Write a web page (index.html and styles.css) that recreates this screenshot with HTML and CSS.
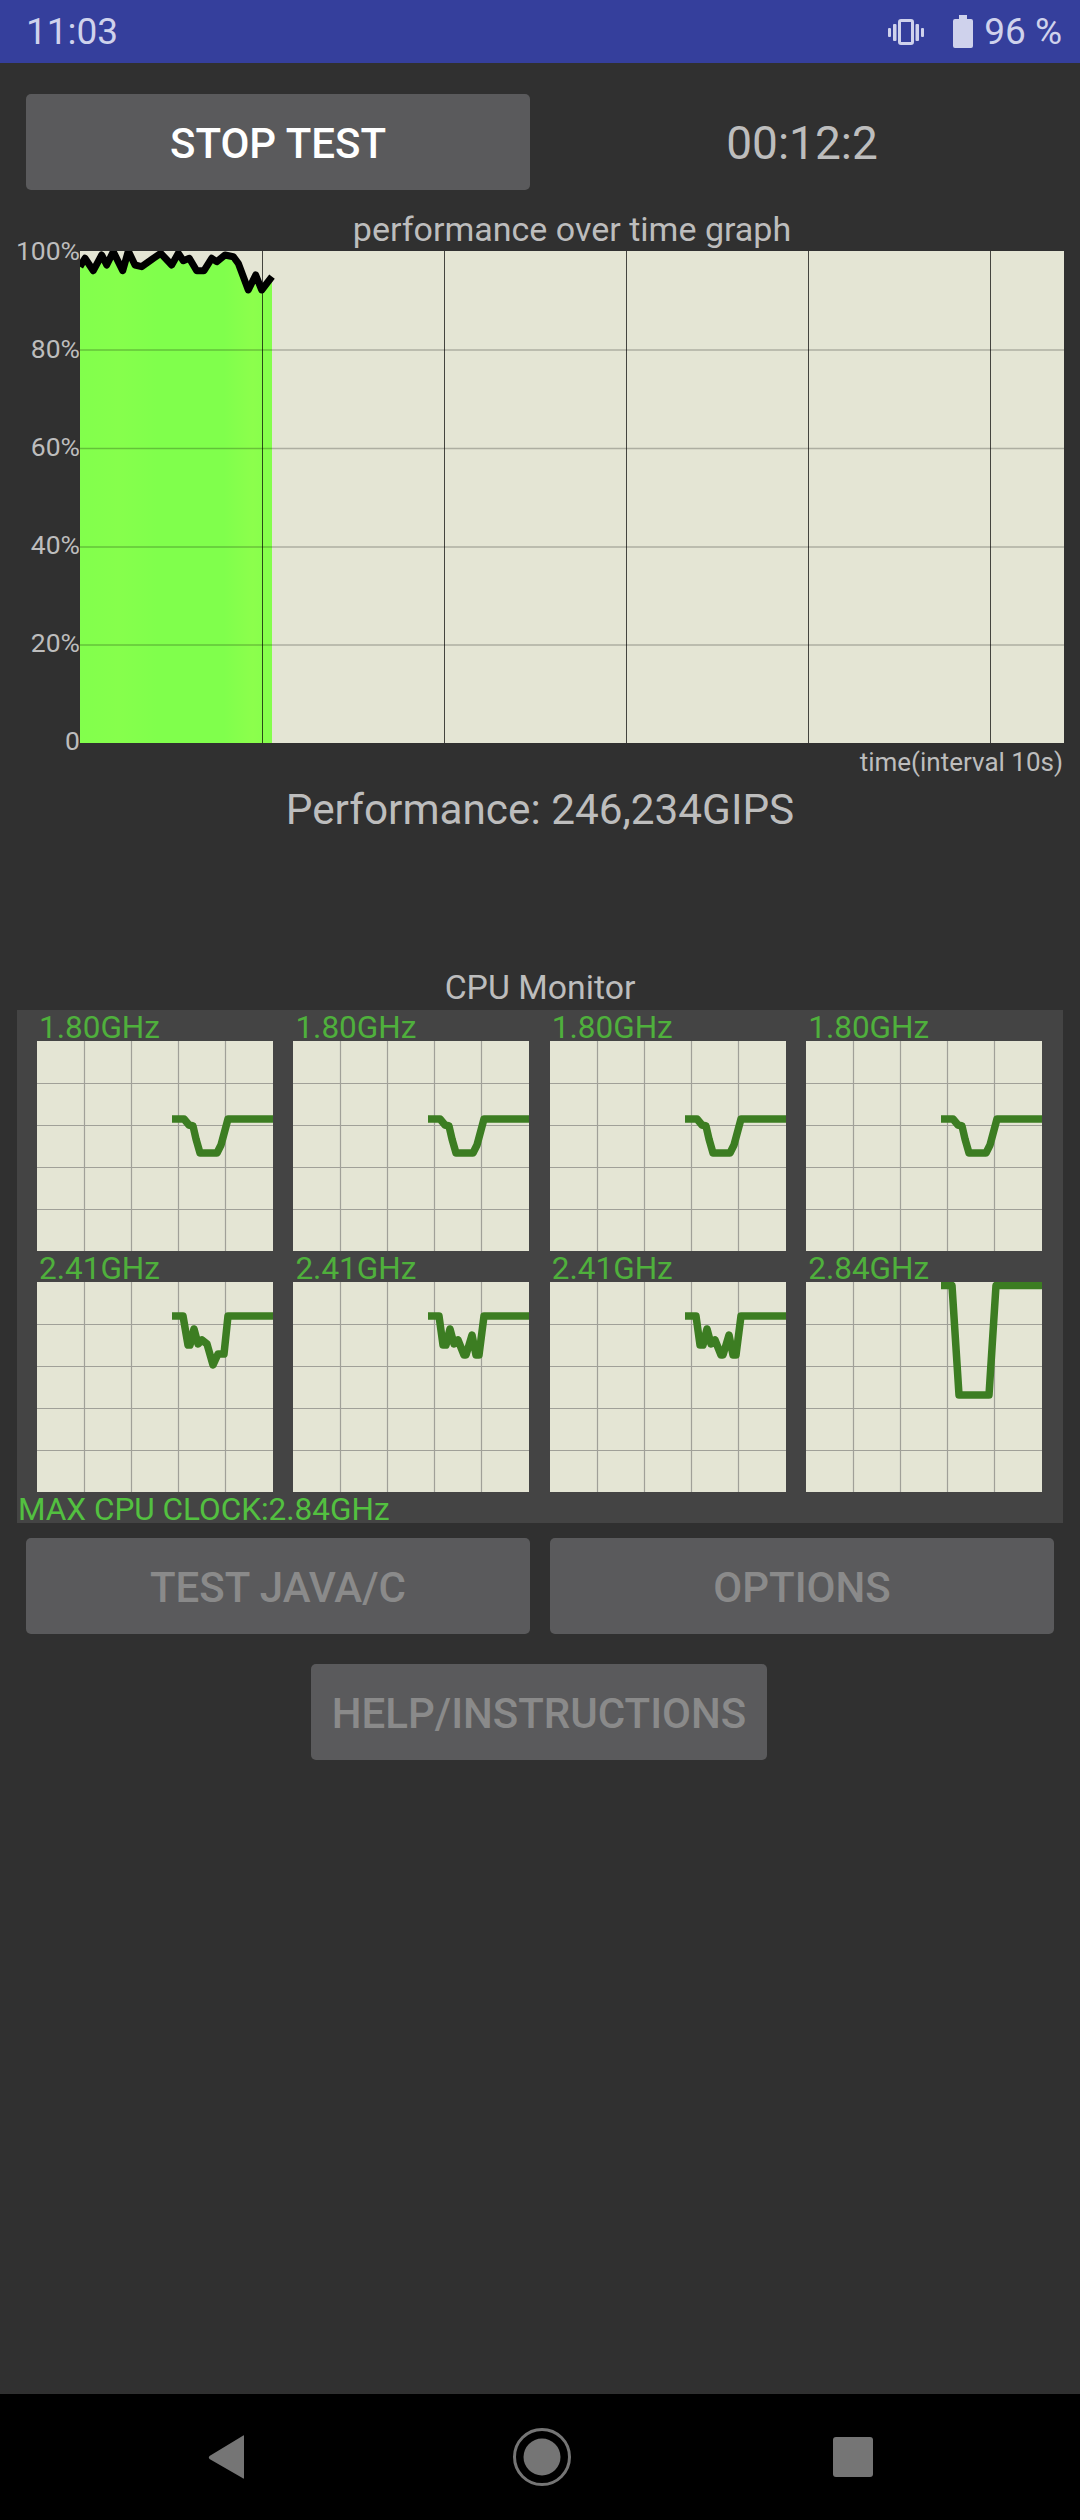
FILE: index.html
```html
<!DOCTYPE html>
<html lang="en">
<head>
<meta charset="utf-8">
<title>CPU Throttling Test</title>
<link rel="stylesheet" href="styles.css">
</head>
<body>
<svg class="defs" width="0" height="0" aria-hidden="true">
  <defs>
    <linearGradient id="greenfill" x1="0" x2="1" y1="0" y2="0">
      <stop offset="0" stop-color="#82ff4c"/>
      <stop offset="0.2" stop-color="#86ff4c"/>
      <stop offset="0.4" stop-color="#80ff4c"/>
      <stop offset="0.75" stop-color="#80ff4c"/>
      <stop offset="0.9" stop-color="#8cff4c"/>
      <stop offset="1" stop-color="#84ff4c"/>
    </linearGradient>
    <symbol id="cpugrid" viewBox="0 0 236 210">
      <path class="cpu-grid" d="M47.5 0V210M94.5 0V210M141.5 0V210M188.5 0V210M0 42.5H236M0 84.5H236M0 126.5H236M0 168.5H236"/>
    </symbol>
  </defs>
</svg>

<header class="status">
  <span class="clock">11:03</span>
  <div class="status-right">
    <svg class="ic-vibrate" width="38" height="26" viewBox="0 0 38 26">
      <rect class="ic-stroke" x="12.5" y="1.5" width="13" height="23" rx="1.5"/>
      <rect class="ic-fill" x="1" y="9" width="3" height="9" rx="1"/>
      <rect class="ic-fill" x="6" y="5" width="3.5" height="17" rx="1"/>
      <rect class="ic-fill" x="28.500" y="5" width="3.5" height="17" rx="1"/>
      <rect class="ic-fill" x="34" y="9" width="3" height="9" rx="1"/>
    </svg>
    <svg class="ic-battery" width="20" height="33" viewBox="0 0 20 33">
      <path class="ic-fill" d="M6 0H14V4H18Q20 4 20 6V31Q20 33 18 33H2Q0 33 0 31V6Q0 4 2 4H6Z"/>
    </svg>
    <span class="pct">96 %</span>
  </div>
</header>

<main class="screen">
  <div class="top-row">
    <button class="btn btn-live" type="button">STOP TEST</button>
    <div class="timer">00:12:2</div>
  </div>

  <div class="graph-title">performance over time graph</div>

  <div class="graph-row">
    <div class="axis">
      <span>100%</span><span>80%</span><span>60%</span><span>40%</span><span>20%</span><span>0</span>
    </div>
    <svg class="graph" width="984" height="492" viewBox="0 0 984 492">
      <polygon fill="url(#greenfill)" points="0,15.7 5,7.3 13.3,19.7 21.7,4 26.7,14 33.3,0.7 42.7,19.7 48.3,0 55,14 61.700,15.7 73.3,7.3 80.7,2.3 91.7,14 98.3,2.3 103.3,9.700 109.3,7.3 116.7,19.7 124,19.7 131.7,7.3 136.7,10.7 145,4 153.3,5.7 158.3,12.3 168.3,39 175.7,24 181.7,39 192,25.7 192,492 0,492"/>
      <path class="graph-h" d="M0 99H984M0 197.500H984M0 296H984M0 394H984"/>
      <path class="graph-v" d="M182.500 0V492M364.500 0V492M546.500 0V492M728.500 0V492M910.500 0V492"/>
      <polyline class="graph-line" points="0,15.7 5,7.3 13.3,19.7 21.7,4 26.7,14 33.3,0.7 42.7,19.7 48.3,0 55,14 61.700,15.7 73.3,7.3 80.7,2.3 91.7,14 98.3,2.3 103.3,9.700 109.3,7.3 116.7,19.7 124,19.7 131.7,7.3 136.7,10.7 145,4 153.3,5.7 158.3,12.3 168.3,39 175.7,24 181.7,39 192,25.7"/>
    </svg>
  </div>

  <div class="time-label">time(interval 10s)</div>
  <div class="performance">Performance: 246,234GIPS</div>
  <div class="monitor-title">CPU Monitor</div>

  <section class="panel">
    <div class="cpu-grid-wrap">
      <div class="cpu">
        <div class="freq">1.80GHz</div>
        <svg class="chart" width="236" height="210" viewBox="0 0 236 210"><use href="#cpugrid" width="236" height="210"/><polyline class="load" points="135,78 147,78 152,84 156,85 159,98 163,112 180,112 184,104 191,78 236,78"/></svg>
      </div>
      <div class="cpu">
        <div class="freq">1.80GHz</div>
        <svg class="chart" width="236" height="210" viewBox="0 0 236 210"><use href="#cpugrid" width="236" height="210"/><polyline class="load" points="135,78 147,78 152,84 156,85 159,98 163,112 180,112 184,104 191,78 236,78"/></svg>
      </div>
      <div class="cpu">
        <div class="freq">1.80GHz</div>
        <svg class="chart" width="236" height="210" viewBox="0 0 236 210"><use href="#cpugrid" width="236" height="210"/><polyline class="load" points="135,78 147,78 152,84 156,85 159,98 163,112 180,112 184,104 191,78 236,78"/></svg>
      </div>
      <div class="cpu">
        <div class="freq">1.80GHz</div>
        <svg class="chart" width="236" height="210" viewBox="0 0 236 210"><use href="#cpugrid" width="236" height="210"/><polyline class="load" points="135,78 147,78 152,84 156,85 159,98 163,112 180,112 184,104 191,78 236,78"/></svg>
      </div>
      <div class="cpu">
        <div class="freq">2.41GHz</div>
        <svg class="chart" width="236" height="210" viewBox="0 0 236 210"><use href="#cpugrid" width="236" height="210"/><polyline class="load" points="135,34 146,34 151,63 153,63 157,47 161,62 165,58 170,62 176,83 181,72 187,72 191,34 236,34"/></svg>
      </div>
      <div class="cpu">
        <div class="freq">2.41GHz</div>
        <svg class="chart" width="236" height="210" viewBox="0 0 236 210"><use href="#cpugrid" width="236" height="210"/><polyline class="load" points="135,34 146,34 150,63 153,63 157,47 161,62 165,58 171,73 173,73 179,53 183,73 186,73 191,34 236,34"/></svg>
      </div>
      <div class="cpu">
        <div class="freq">2.41GHz</div>
        <svg class="chart" width="236" height="210" viewBox="0 0 236 210"><use href="#cpugrid" width="236" height="210"/><polyline class="load" points="135,34 146,34 150,63 153,63 157,47 161,62 165,58 171,73 173,73 179,53 183,73 186,73 191,34 236,34"/></svg>
      </div>
      <div class="cpu">
        <div class="freq">2.84GHz</div>
        <svg class="chart" width="236" height="210" viewBox="0 0 236 210"><use href="#cpugrid" width="236" height="210"/><polyline class="load" points="135,3.500 146,3.500 153,113 183,113 190,3.500 236,3.500"/></svg>
      </div>
    </div>
    <div class="max-clock">MAX CPU CLOCK:2.84GHz</div>
  </section>

  <div class="btn-row">
    <button class="btn btn-dim" type="button">TEST JAVA/C</button>
    <button class="btn btn-dim" type="button">OPTIONS</button>
  </div>
  <div class="help-row">
    <button class="btn btn-dim btn-help" type="button">HELP/INSTRUCTIONS</button>
  </div>
</main>

<nav class="navbar">
  <svg width="60" height="60" viewBox="0 0 60 60"><path class="nav-fill" d="M47 9.500V50.500Q47 52.500 45.500 51L12.500 32Q11 30.500 12.500 29L45.500 9Q47 7.500 47 9.500Z"/></svg>
  <svg class="nav-home" width="60" height="60" viewBox="0 0 60 60"><circle class="nav-ring" cx="30" cy="30" r="27.500"/><circle class="nav-fill" cx="30" cy="30" r="18.500"/></svg>
  <svg width="60" height="60" viewBox="0 0 60 60"><rect class="nav-fill" x="10" y="10" width="40" height="40" rx="3"/></svg>
</nav>
</body>
</html>
```
FILE: styles.css
```css
* { box-sizing: border-box; }

html, body { margin: 0; padding: 0; }

body {
  width: 1080px;
  height: 2520px;
  display: flex;
  flex-direction: column;
  background: #303030;
  font-family: Roboto, "Noto Sans", sans-serif;
  overflow: hidden;
}

.defs { display: block; height: 0; }

/* status bar */
.status {
  flex: none;
  height: 63px;
  background: #353f9c;
  color: #cfd2ec;
  font-size: 37px;
  padding: 0 18px 0 26px;
  display: flex;
  align-items: center;
  justify-content: space-between;
}
.status-right { display: flex; align-items: center; }
.ic-vibrate { margin-right: 28px; }
.ic-battery { margin-right: 11px; }
.ic-fill { fill: #cfd2ec; }
.ic-stroke { fill: none; stroke: #cfd2ec; stroke-width: 3; }

/* main column */
.screen { flex: 1; display: flex; flex-direction: column; }

.top-row {
  display: flex;
  gap: 20px;
  margin: 31px 26px 0;
}
.timer {
  width: 504px;
  padding-top: 2px;
  display: flex;
  align-items: center;
  justify-content: center;
  color: #bdbdbd;
  font-size: 46px;
}

.btn {
  width: 504px;
  height: 96px;
  border: 0;
  border-radius: 5px;
  background: #5a5a5c;
  font-family: inherit;
  font-size: 42px;
  font-weight: 500;
  padding: 2px 0 0;
}
.btn-live { color: #fff; }
.btn-dim { color: #8a8a8a; }
.btn-help { width: 456px; }

.graph-title {
  height: 61px;
  padding: 18px 0 0 80px;
  text-align: center;
  margin-right: 16px;
  color: #bdbdbd;
  font-size: 34px;
  line-height: 42px;
}

.graph-row { display: flex; height: 492px; padding-right: 16px; }
.axis {
  width: 80px;
  height: 518px;
  margin-top: -14px;
  display: flex;
  flex-direction: column;
  justify-content: space-between;
  align-items: flex-end;
  color: #bdbdbd;
  font-size: 26.500px;
  line-height: 28px;
}
.graph { display: block; background: #e4e5d4; flex: none; }
.graph-h { stroke: #000; stroke-opacity: 0.24; stroke-width: 1.5; fill: none; }
.graph-v { stroke: #000; stroke-opacity: 0.7; stroke-width: 1; fill: none; }
.graph-line { fill: none; stroke: #000; stroke-width: 7; stroke-linejoin: round; }

.time-label {
  height: 44px;
  padding: 3px 17px 0 0;
  text-align: right;
  color: #bdbdbd;
  font-size: 26px;
  line-height: 32px;
}
.performance {
  height: 56px;
  text-align: center;
  color: #bdbdbd;
  font-size: 42.300px;
  line-height: 46px;
}
.monitor-title {
  margin-top: 125px;
  height: 42px;
  text-align: center;
  color: #bdbdbd;
  font-size: 33.800px;
  line-height: 40px;
}

/* cpu monitor */
.panel {
  margin: 0 17px;
  height: 513px;
  background: #444;
  display: flex;
  flex-direction: column;
}
.cpu-grid-wrap {
  display: grid;
  grid-template-columns: repeat(4, 236px);
  column-gap: 20.400px;
  padding-left: 20px;
}
.freq {
  height: 31px;
  padding-left: 2px;
  color: #4fb03c;
  font-size: 31.500px;
  line-height: 36px;
  white-space: nowrap;
}
.chart { display: block; background: #e4e5d4; overflow: hidden; }
.cpu-grid { stroke: #a0a098; stroke-width: 1.200; fill: none; }
.load { fill: none; stroke: #3c7d22; stroke-width: 7.500; stroke-linejoin: round; }
.max-clock {
  height: 31px;
  padding-left: 1px;
  color: #53c040;
  font-size: 31.500px;
  line-height: 36px;
  white-space: nowrap;
}

.btn-row {
  display: flex;
  gap: 20px;
  margin: 15px 26px 0;
}
.help-row {
  display: flex;
  justify-content: center;
  margin-top: 30px;
  padding-right: 2px;
}

/* navigation */
.navbar {
  flex: none;
  height: 126px;
  background: #000;
  display: flex;
  align-items: center;
  justify-content: space-between;
  padding: 0 197px;
}
.navbar svg { display: block; }
.nav-home { margin-left: 3px; }
.nav-fill { fill: #757575; }
.nav-ring { fill: none; stroke: #757575; stroke-width: 3; }
```
